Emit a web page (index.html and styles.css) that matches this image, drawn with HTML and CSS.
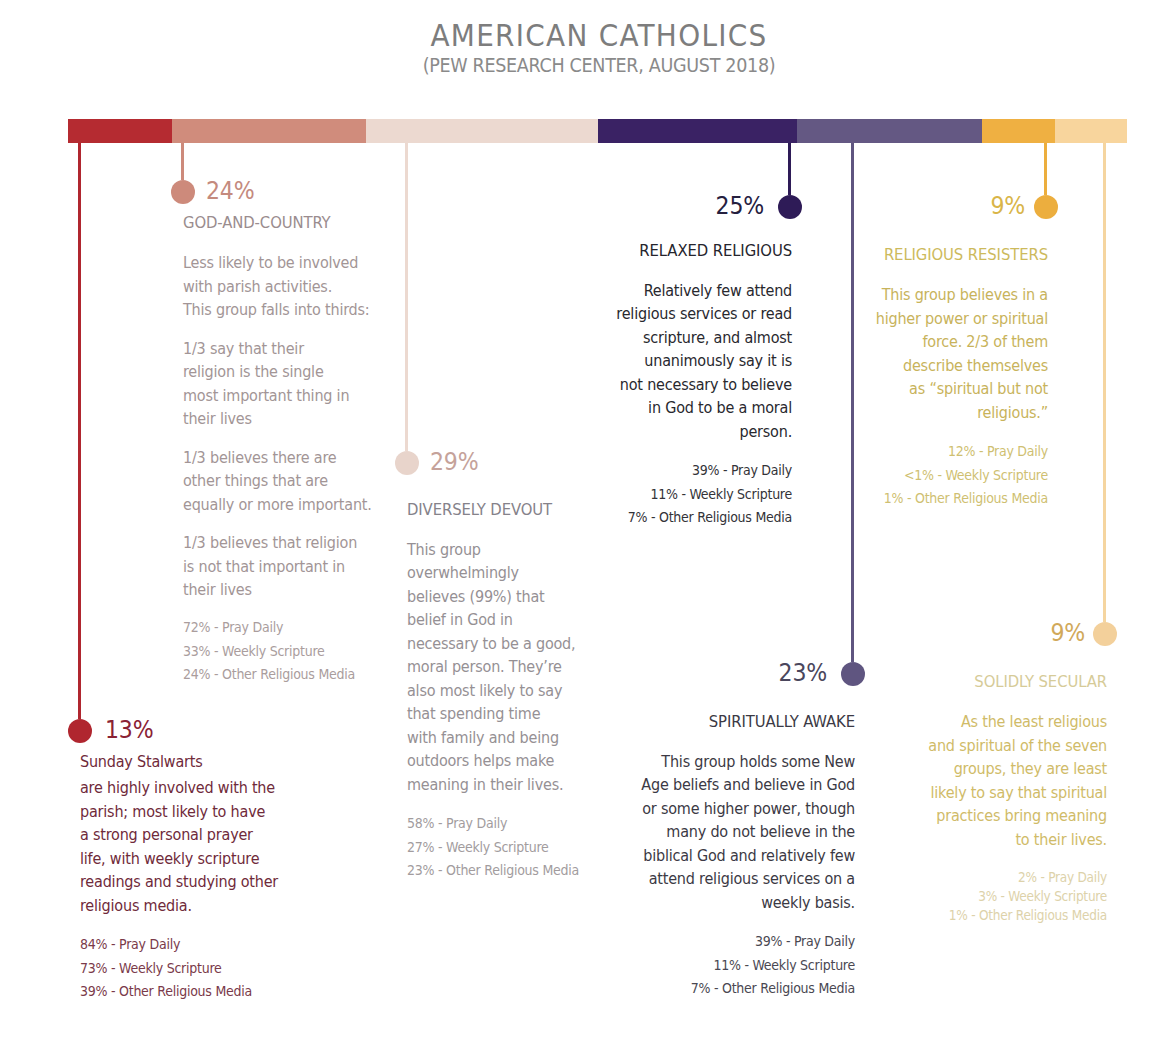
FILE: index.html
```html
<!DOCTYPE html>
<html lang="en">
<head>
<meta charset="utf-8">
<title>American Catholics</title>
<link rel="stylesheet" href="styles.css">
</head>
<body>
<div class="page">
  <header class="header">
    <h1 class="title">AMERICAN CATHOLICS</h1>
    <p class="subtitle">(PEW RESEARCH CENTER, AUGUST 2018)</p>
  </header>

  <div class="chart">
    <div class="bar">
      <span class="seg seg-a" style="width:104px"></span>
      <span class="seg seg-b" style="width:194px"></span>
      <span class="seg seg-c" style="width:232px"></span>
      <span class="seg seg-d" style="width:199px"></span>
      <span class="seg seg-e" style="width:185px"></span>
      <span class="seg seg-f" style="width:73px"></span>
      <span class="seg seg-g" style="width:72px"></span>
    </div>

    <div class="groups">
      <section class="group left g-a">
        <div class="stem"></div>
        <div class="head"><span class="dot"></span><span class="pct">13%</span></div>
        <div class="name">Sunday Stalwarts</div>
        <p class="desc">are highly involved with the<br>parish; most likely to have<br>a strong personal prayer<br>life, with weekly scripture<br>readings and studying other<br>religious media.</p>
        <ul class="stats">
          <li>84% - Pray Daily</li>
          <li>73% - Weekly Scripture</li>
          <li>39% - Other Religious Media</li>
        </ul>
      </section>

      <section class="group left g-b">
        <div class="stem"></div>
        <div class="head"><span class="dot"></span><span class="pct">24%</span></div>
        <div class="name">GOD-AND-COUNTRY</div>
        <p class="desc">Less likely to be involved<br>with parish activities.<br>This group falls into thirds:</p>
        <p class="desc">1/3 say that their<br>religion is the single<br>most important thing in<br>their lives</p>
        <p class="desc">1/3 believes there are<br>other things that are<br>equally or more important.</p>
        <p class="desc">1/3 believes that religion<br>is not that important in<br>their lives</p>
        <ul class="stats">
          <li>72% - Pray Daily</li>
          <li>33% - Weekly Scripture</li>
          <li>24% - Other Religious Media</li>
        </ul>
      </section>

      <section class="group left g-c">
        <div class="stem"></div>
        <div class="head"><span class="dot"></span><span class="pct">29%</span></div>
        <div class="name">DIVERSELY DEVOUT</div>
        <p class="desc">This group<br>overwhelmingly<br>believes (99%) that<br>belief in God in<br>necessary to be a good,<br>moral person. They’re<br>also most likely to say<br>that spending time<br>with family and being<br>outdoors helps make<br>meaning in their lives.</p>
        <ul class="stats">
          <li>58% - Pray Daily</li>
          <li>27% - Weekly Scripture</li>
          <li>23% - Other Religious Media</li>
        </ul>
      </section>

      <section class="group right g-d">
        <div class="stem"></div>
        <div class="head"><span class="pct">25%</span><span class="dot"></span></div>
        <div class="name">RELAXED RELIGIOUS</div>
        <p class="desc">Relatively few attend<br>religious services or read<br>scripture, and almost<br>unanimously say it is<br>not necessary to believe<br>in God to be a moral<br>person.</p>
        <ul class="stats">
          <li>39% - Pray Daily</li>
          <li>11% - Weekly Scripture</li>
          <li>7% - Other Religious Media</li>
        </ul>
      </section>

      <section class="group right g-e">
        <div class="stem"></div>
        <div class="head"><span class="pct">23%</span><span class="dot"></span></div>
        <div class="name">SPIRITUALLY AWAKE</div>
        <p class="desc">This group holds some New<br>Age beliefs and believe in God<br>or some higher power, though<br>many do not believe in the<br>biblical God and relatively few<br>attend religious services on a<br>weekly basis.</p>
        <ul class="stats">
          <li>39% - Pray Daily</li>
          <li>11% - Weekly Scripture</li>
          <li>7% - Other Religious Media</li>
        </ul>
      </section>

      <section class="group right g-f">
        <div class="stem"></div>
        <div class="head"><span class="pct">9%</span><span class="dot"></span></div>
        <div class="name">RELIGIOUS RESISTERS</div>
        <p class="desc">This group believes in a<br>higher power or spiritual<br>force. 2/3 of them<br>describe themselves<br>as “spiritual but not<br>religious.”</p>
        <ul class="stats">
          <li>12% - Pray Daily</li>
          <li>&lt;1% - Weekly Scripture</li>
          <li>1% - Other Religious Media</li>
        </ul>
      </section>

      <section class="group right g-g">
        <div class="stem"></div>
        <div class="head"><span class="pct">9%</span><span class="dot"></span></div>
        <div class="name">SOLIDLY SECULAR</div>
        <p class="desc">As the least religious<br>and spiritual of the seven<br>groups, they are least<br>likely to say that spiritual<br>practices bring meaning<br>to their lives.</p>
        <ul class="stats">
          <li>2% - Pray Daily</li>
          <li>3% - Weekly Scripture</li>
          <li>1% - Other Religious Media</li>
        </ul>
      </section>
    </div>
  </div>
</div>
</body>
</html>
```
FILE: styles.css
```css
* { box-sizing: border-box; }

html, body {
  margin: 0;
  padding: 0;
  background: #ffffff;
}

body {
  font-family: "DejaVu Sans Condensed", "Liberation Sans Narrow", "Liberation Sans", sans-serif;
  color: #444;
}

.page {
  width: 1172px;
  min-height: 1044px;
}

.header {
  padding: 17px 0 0 26px;
  text-align: center;
}

.title {
  margin: 0;
  font-weight: 400;
  font-size: 31px;
  line-height: 36px;
  letter-spacing: 1.3px;
  color: #7d7d7d;
}

.subtitle {
  margin: 1px 0 0;
  font-size: 19.5px;
  line-height: 24px;
  letter-spacing: -0.3px;
  color: #8a8a8a;
}

.chart {
  margin: 41px 0 0 68px;
  width: 1059px;
}

.bar {
  display: flex;
  height: 24px;
}

.seg { display: block; height: 100%; }
.seg-a { background: #b52b31; }
.seg-b { background: #d08c7c; }
.seg-c { background: #ecd9d0; }
.seg-d { background: #3a2264; }
.seg-e { background: #645883; }
.seg-f { background: #efb042; }
.seg-g { background: #f8d59d; }

.groups {
  display: grid;
  grid-template-columns: 12px [a] 103px [b] 224px [c] 385px [d] 63px [e] 193px [f] 59px [g] 20px;
  grid-template-rows: auto;
}

.group {
  grid-row: 1;
  align-self: start;
  display: flex;
  flex-direction: column;
  white-space: nowrap;
}

.group.left { justify-self: start; text-align: left; align-items: flex-start; }
.group.right { justify-self: end; text-align: right; align-items: flex-end; }

.g-a { grid-column: a / -1; }
.g-b { grid-column: b / -1; }
.g-c { grid-column: c / -1; }
.g-d { grid-column: 1 / d; }
.g-e { grid-column: 1 / e; }
.g-f { grid-column: 1 / f; }
.g-g { grid-column: 1 / g; }

.stem {
  width: 3px;
}
.left .stem { margin-left: -2px; }
.right .stem { margin-right: 1px; }

.head {
  display: flex;
  align-items: center;
  height: 24px;
}

.dot {
  width: 24px;
  height: 24px;
  border-radius: 50%;
  flex: none;
}
.left .dot { margin-left: -12px; margin-right: 11px; }
.right .dot { margin-right: -10px; margin-left: 14px; }

.pct {
  font-size: 24.5px;
  line-height: 24px;
  letter-spacing: -0.2px;
  position: relative;
  top: -1px;
}

.name {
  font-size: 16.5px;
  line-height: 23.5px;
  letter-spacing: -0.1px;
}

.desc {
  margin: 16px 0 0;
  font-size: 16px;
  line-height: 23.5px;
  letter-spacing: -0.2px;
}
.desc + .desc { margin-top: 15px; }

.stats {
  list-style: none;
  margin: 16px 0 0;
  padding: 0;
  font-size: 14px;
  line-height: 23.5px;
  letter-spacing: -0.25px;
}

/* A — Sunday Stalwarts */
.g-a .stem { height: 576px; background: #b0262f; }
.g-a .dot { background: #b0262f; }
.g-a .pct { color: #8a2234; margin-left: 2px; }
.g-a .name { margin-top: 7px; font-size: 16px; letter-spacing: -0.2px; color: #6f2a3a; }
.g-a .desc { margin-top: 2.5px; color: #6f2a3a; }
.g-a .stats { color: #7a3a4a; }

/* B — God-and-Country */
.g-b .stem { height: 37px; background: #cd8a7b; }
.g-b .dot { background: #cd8a7b; }
.g-b .pct { color: #c48a7e; }
.g-b .name { margin-top: 7px; color: #9a8c8e; }
.g-b .desc { color: #a29596; }
.g-b .desc:first-of-type { margin-top: 16.5px; }
.g-b .stats { margin-top: 14.5px; color: #aa9d9d; }

/* C — Diversely Devout */
.g-c .stem { height: 308px; background: #ecd9d0; }
.g-c .dot { background: #e8d4cb; }
.g-c .pct { color: #c5a29a; }
.g-c .name { margin-top: 23.25px; color: #85828a; }
.g-c .desc { color: #959094; }
.g-c .stats { color: #a29c9e; }

/* D — Relaxed Religious */
.g-d .stem { height: 52px; background: #2e1b57; }
.g-d .dot { background: #2e1b57; }
.g-d .pct { color: #25203f; }
.g-d .name { margin-top: 20.25px; color: #25252d; }
.g-d .desc { color: #28282e; }
.g-d .stats { color: #333338; }

/* E — Spiritually Awake */
.g-e .stem { height: 519px; background: #5f5580; }
.g-e .dot { background: #5f5580; }
.g-e .pct { color: #4a465c; }
.g-e .name { margin-top: 24.25px; color: #3b3944; }
.g-e .desc { color: #3b3944; }
.g-e .stats { color: #4a4852; }

/* F — Religious Resisters */
.g-f .stem { height: 52px; background: #ecae3e; }
.g-f .dot { background: #ecae3e; }
.g-f .pct { color: #d9b548; }
.g-f .dot { margin-left: 9px; }
.g-f .name { margin-top: 24.25px; color: #cdba5c; }
.g-f .desc { margin-top: 16.5px; color: #c8b35b; }
.g-f .stats { color: #cfbf72; }

/* G — Solidly Secular */
.g-g .stem { height: 479px; background: #f5d5a0; }
.g-g .dot { background: #f3d09b; margin-left: 8px; }
.g-g .pct { color: #d1a95a; }
.g-g .name { margin-top: 24.25px; color: #d6cb98; }
.g-g .desc { margin-top: 16.5px; color: #d0bb68; }
.g-g .stats { margin-top: 16.75px; font-size: 13.5px; line-height: 19px; color: #ddd2aa; }
```
